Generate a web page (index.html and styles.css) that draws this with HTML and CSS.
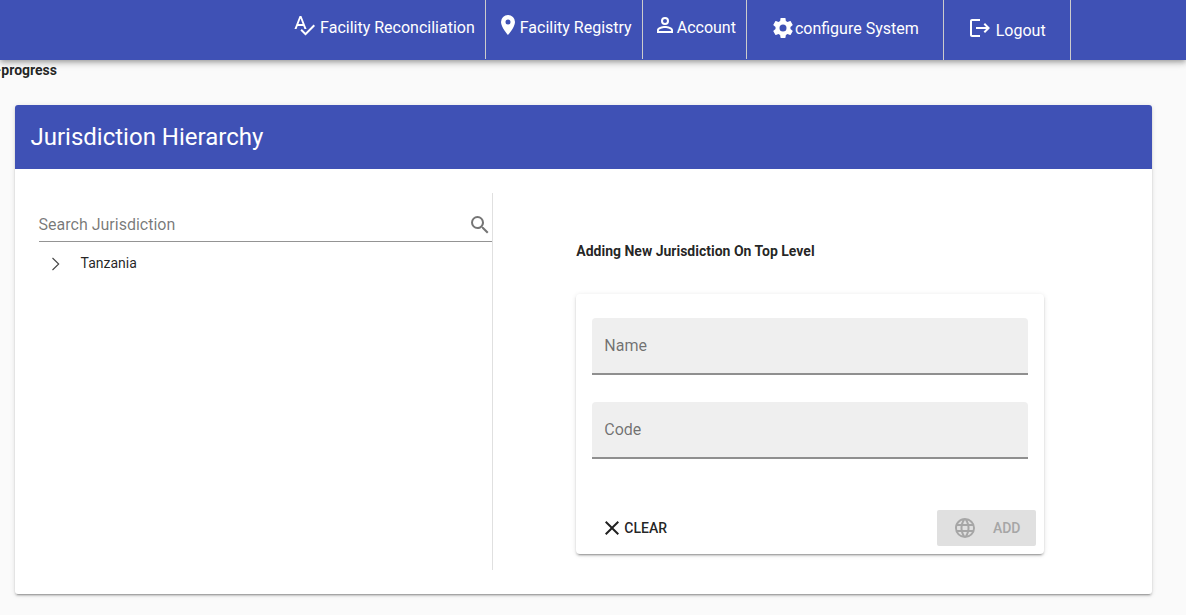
FILE: index.html
```html
<!DOCTYPE html>
<html lang="en">
<head>
<meta charset="utf-8">
<title>Jurisdiction Hierarchy</title>
<link rel="stylesheet" href="styles.css">
</head>
<body>
<header class="toolbar">
  <a class="nav-item spaced"><svg class="icon" viewBox="0 0 24 24"><path d="M21.59,11.59L13.5,19.68L9.83,16L8.42,17.41L13.5,22.5L23,13M6.43,11L8.5,5.5L10.57,11M12.45,16H14.54L9.43,3H7.57L2.46,16H4.55L5.67,13H11.31L12.45,16Z"/></svg><span>Facility Reconciliation</span></a>
  <a class="nav-item"><svg class="icon" viewBox="0 0 24 24"><path d="M12,11.5A2.5,2.5 0 0,1 9.5,9A2.5,2.5 0 0,1 12,6.5A2.5,2.5 0 0,1 14.5,9A2.5,2.5 0 0,1 12,11.5M12,2A7,7 0 0,0 5,9C5,14.25 12,22 12,22C12,22 19,14.25 19,9A7,7 0 0,0 12,2Z"/></svg><span>Facility Registry</span></a>
  <a class="nav-item"><svg class="icon" viewBox="0 0 24 24"><path d="M12,4A4,4 0 0,1 16,8A4,4 0 0,1 12,12A4,4 0 0,1 8,8A4,4 0 0,1 12,4M12,6A2,2 0 0,0 10,8A2,2 0 0,0 12,10A2,2 0 0,0 14,8A2,2 0 0,0 12,6M12,13C14.67,13 20,14.33 20,17V20H4V17C4,14.33 9.33,13 12,13M12,14.9C9.03,14.9 5.9,16.36 5.9,17V18.1H18.1V17C18.1,16.36 14.97,14.9 12,14.9Z"/></svg><span>Account</span></a>
  <a class="nav-item wide"><svg class="icon" viewBox="0 0 24 24"><path d="M12,15.5A3.5,3.5 0 0,1 8.5,12A3.5,3.5 0 0,1 12,8.5A3.5,3.5 0 0,1 15.5,12A3.5,3.5 0 0,1 12,15.5M19.43,12.97C19.47,12.65 19.5,12.33 19.5,12C19.5,11.67 19.47,11.34 19.43,11L21.54,9.37C21.73,9.22 21.78,8.95 21.66,8.73L19.66,5.27C19.54,5.05 19.27,4.96 19.05,5.05L16.56,6.05C16.04,5.66 15.5,5.32 14.87,5.07L14.5,2.42C14.46,2.18 14.25,2 14,2H10C9.75,2 9.54,2.18 9.5,2.42L9.13,5.07C8.5,5.32 7.96,5.66 7.44,6.05L4.95,5.05C4.73,4.96 4.46,5.05 4.34,5.27L2.34,8.73C2.21,8.95 2.27,9.22 2.46,9.37L4.57,11C4.53,11.34 4.5,11.67 4.5,12C4.5,12.33 4.53,12.65 4.57,12.97L2.46,14.63C2.27,14.78 2.21,15.05 2.34,15.27L4.34,18.73C4.46,18.95 4.73,19.03 4.95,18.95L7.44,17.94C7.96,18.34 8.5,18.68 9.13,18.93L9.5,21.58C9.54,21.82 9.75,22 10,22H14C14.25,22 14.46,21.82 14.5,21.58L14.87,18.93C15.5,18.67 16.04,18.34 16.56,17.94L19.05,18.95C19.27,19.03 19.54,18.95 19.66,18.73L21.66,15.27C21.78,15.05 21.73,14.78 21.54,14.63L19.43,12.97Z"/></svg><span>configure System</span></a>
  <a class="nav-item wide spaced logout"><svg class="icon" viewBox="0 0 24 24"><path d="M17 7L15.59 8.41L18.17 11H8V13H18.17L15.59 15.58L17 17L22 12M4 5H12V3H4C2.9 3 2 3.9 2 5V19C2 20.1 2.9 21 4 21H12V19H4V5Z"/></svg><span>Logout</span></a>
</header>
<div class="status"><b>-progress</b></div>
<main class="card page-card">
  <h1 class="card-title">Jurisdiction Hierarchy</h1>
  <div class="card-body">
    <section class="tree">
      <div class="search"><span>Search Jurisdiction</span><svg class="icon" viewBox="0 0 24 24"><path d="M9.5,3A6.5,6.5 0 0,1 16,9.5C16,11.11 15.41,12.59 14.44,13.73L14.71,14H15.5L20.5,19L19,20.5L14,15.5V14.71L13.73,14.44C12.59,15.41 11.11,16 9.5,16A6.5,6.5 0 0,1 3,9.5A6.5,6.5 0 0,1 9.5,3M9.5,5C7,5 5,7 5,9.5C5,12 7,14 9.5,14C12,14 14,12 14,9.5C14,7 12,5 9.5,5Z"/></svg></div>
      <div class="tree-node"><svg class="chevron" viewBox="0 0 10 14"><path d="M1.5 1L7.7 7L1.5 13"/></svg><span>Tanzania</span></div>
    </section>
    <section class="editor">
      <h2 class="editor-title">Adding New Jurisdiction On Top Level</h2>
      <form class="card form">
        <div class="field">Name</div>
        <div class="field">Code</div>
        <div class="actions">
          <button type="button" class="btn clear"><svg class="icon" viewBox="0 0 24 24"><path d="M19,6.41L17.59,5L12,10.59L6.41,5L5,6.41L10.59,12L5,17.59L6.41,19L12,13.41L17.59,19L19,17.59L13.41,12L19,6.41Z"/></svg>CLEAR</button>
          <button type="button" class="btn add" disabled><svg class="icon" viewBox="0 0 24 24"><path d="M16.36,14C16.44,13.34 16.5,12.68 16.5,12C16.5,11.32 16.44,10.66 16.36,10H19.74C19.9,10.64 20,11.31 20,12C20,12.69 19.9,13.36 19.74,14M14.59,19.56C15.19,18.45 15.65,17.25 15.97,16H18.92C17.96,17.65 16.43,18.93 14.59,19.56M14.34,14H9.66C9.56,13.34 9.5,12.68 9.5,12C9.5,11.32 9.56,10.65 9.66,10H14.34C14.43,10.65 14.5,11.32 14.5,12C14.5,12.68 14.43,13.34 14.34,14M12,19.96C11.17,18.76 10.5,17.43 10.09,16H13.91C13.5,17.43 12.83,18.76 12,19.96M8,8H5.08C6.03,6.34 7.57,5.06 9.4,4.44C8.8,5.55 8.35,6.75 8,8M5.08,16H8C8.35,17.25 8.8,18.45 9.4,19.56C7.57,18.93 6.03,17.65 5.08,16M4.26,14C4.1,13.36 4,12.69 4,12C4,11.31 4.1,10.64 4.26,10H7.64C7.56,10.66 7.5,11.32 7.5,12C7.5,12.68 7.56,13.34 7.64,14M12,4.03C12.83,5.23 13.5,6.57 13.91,8H10.09C10.5,6.57 11.17,5.23 12,4.03M18.92,8H15.97C15.65,6.75 15.19,5.55 14.59,4.44C16.43,5.07 17.96,6.34 18.92,8M12,2C6.47,2 2,6.5 2,12A10,10 0 0,0 12,22A10,10 0 0,0 22,12A10,10 0 0,0 12,2Z"/></svg>ADD</button>
        </div>
      </form>
    </section>
  </div>
</main>
</body>
</html>
```
FILE: styles.css
```css
* { box-sizing: border-box; }
body {
  margin: 0;
  height: 615px;
  overflow: hidden;
  background: #fafafa;
  color: rgba(0, 0, 0, .87);
  font: 14px/20px Roboto, sans-serif;
}
.icon { width: 24px; height: 24px; flex: none; fill: currentColor; }

.toolbar {
  position: relative;
  display: flex;
  justify-content: flex-end;
  height: 60px;
  padding-right: 115.4px;
  background: #3f51b5;
  color: #fff;
  font-size: 16px;
  line-height: 24px;
  box-shadow: 0 2px 4px -1px rgba(0,0,0,.2), 0 4px 5px 0 rgba(0,0,0,.14), 0 1px 10px 0 rgba(0,0,0,.12);
}
.nav-item {
  display: flex;
  align-items: flex-start;
  height: 59px;
  padding: 13px 10px 0;
  border-right: 1px solid #ccc;
  white-space: nowrap;
}
.nav-item span { padding-top: 3px; }
.spaced { gap: 4px; }
.wide { height: 60px; padding: 16px 24px 0; }
.wide span { padding-top: 1px; }
.logout span { padding-top: 3px; }

.status { width: 57px; height: 45px; display: flex; justify-content: flex-end; white-space: nowrap; }
.status b { line-height: 21px; }

.card {
  background: #fff;
  border-radius: 4px;
  box-shadow: 0 3px 1px -2px rgba(0,0,0,.2), 0 2px 2px 0 rgba(0,0,0,.14), 0 1px 5px 0 rgba(0,0,0,.12);
}
.page-card { width: 1137px; height: 489px; margin-left: 15px; border-radius: 3px; }
.card-title {
  margin: 0;
  padding: 16px 15.5px;
  border-radius: 3px 3px 0 0;
  background: #3f51b5;
  color: #fff;
  font-size: 24px;
  font-weight: 400;
  line-height: 32px;
}
.card-body { display: flex; padding: 24px 24px 24px 23.6px; }
.tree { width: 454.4px; height: 377px; padding-top: 16px; border-right: 1px solid rgba(0,0,0,.12); }
.search {
  display: flex;
  justify-content: space-between;
  height: 33px;
  padding-top: 4px;
  border-bottom: 1px solid #949494;
  color: rgba(0,0,0,.54);
  font-size: 16px;
  line-height: 24px;
}
.tree-node { display: flex; align-items: center; gap: 20px; padding: 11px 0 0 12px; }
.chevron { width: 10px; height: 14px; margin-top: 2px; fill: none; stroke: #444; stroke-width: 1.1; }

.editor { width: 468px; margin: 48px 0 0 83.3px; }
.editor-title { margin: 0 0 33px; font-size: 14px; font-weight: 700; line-height: 20px; }
.form { height: 260px; padding: 24px 16px 0; }
.field {
  height: 57px;
  margin-bottom: 27px;
  padding: 16px 12px;
  border-bottom: 2px solid #8f8f8f;
  border-radius: 4px 4px 0 0;
  background: #efefef;
  color: rgba(0,0,0,.54);
  font-size: 16px;
  line-height: 24px;
}
.actions { display: flex; justify-content: space-between; margin: 51px -8px 0 -4px; }
.btn {
  display: flex;
  align-items: center;
  height: 36px;
  padding: 0 12px;
  border: 0;
  border-radius: 2px;
  background: none;
  color: rgba(0,0,0,.87);
  font: 500 14px/20px Roboto, sans-serif;
}
.add { gap: 16px; width: 99px; padding: 0 15.6px; background: #e0e0e0; color: #a6a6a6; }
```
